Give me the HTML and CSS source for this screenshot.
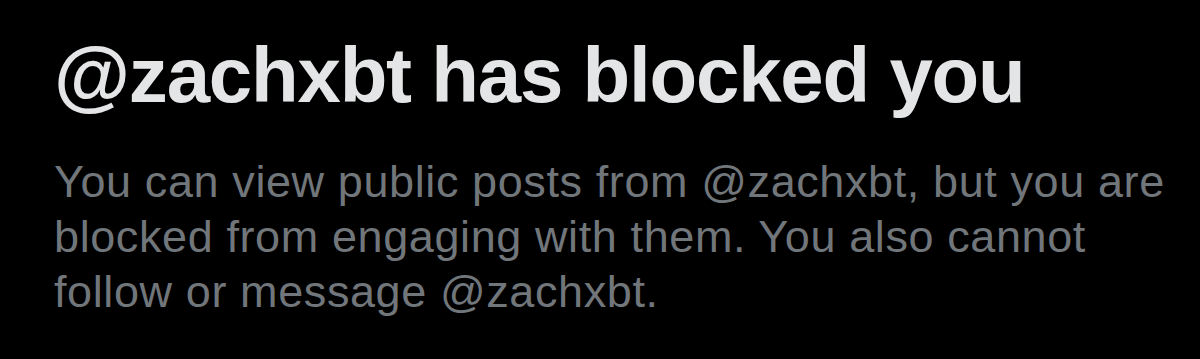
FILE: index.html
```html
<!DOCTYPE html>
<html lang="en">
<head>
<meta charset="utf-8">
<link rel="stylesheet" href="styles.css">
</head>
<body>
<main class="notice">
  <h1 class="notice-title">@zachxbt has blocked you</h1>
  <p class="notice-text">You can view public posts from @zachxbt, but you are blocked from engaging with them. You also cannot follow or message @zachxbt.</p>
</main>
</body>
</html>
```
FILE: styles.css
```css
html, body {
  margin: 0;
  padding: 0;
  background: #000;
  height: 100%;
}
.notice {
  padding: 30px 0 0 54px;
  font-family: "Liberation Sans", Arial, sans-serif;
}
.notice-title {
  margin: 0;
  color: #e3e5e6;
  font-size: 78px;
  font-weight: 700;
  line-height: 90px;
  letter-spacing: -1.2px;
}
.notice-text {
  margin: 34px 0 0;
  color: #71767b;
  font-size: 45px;
  line-height: 55px;
  letter-spacing: 0.6px;
  width: 1140px;
}
```
